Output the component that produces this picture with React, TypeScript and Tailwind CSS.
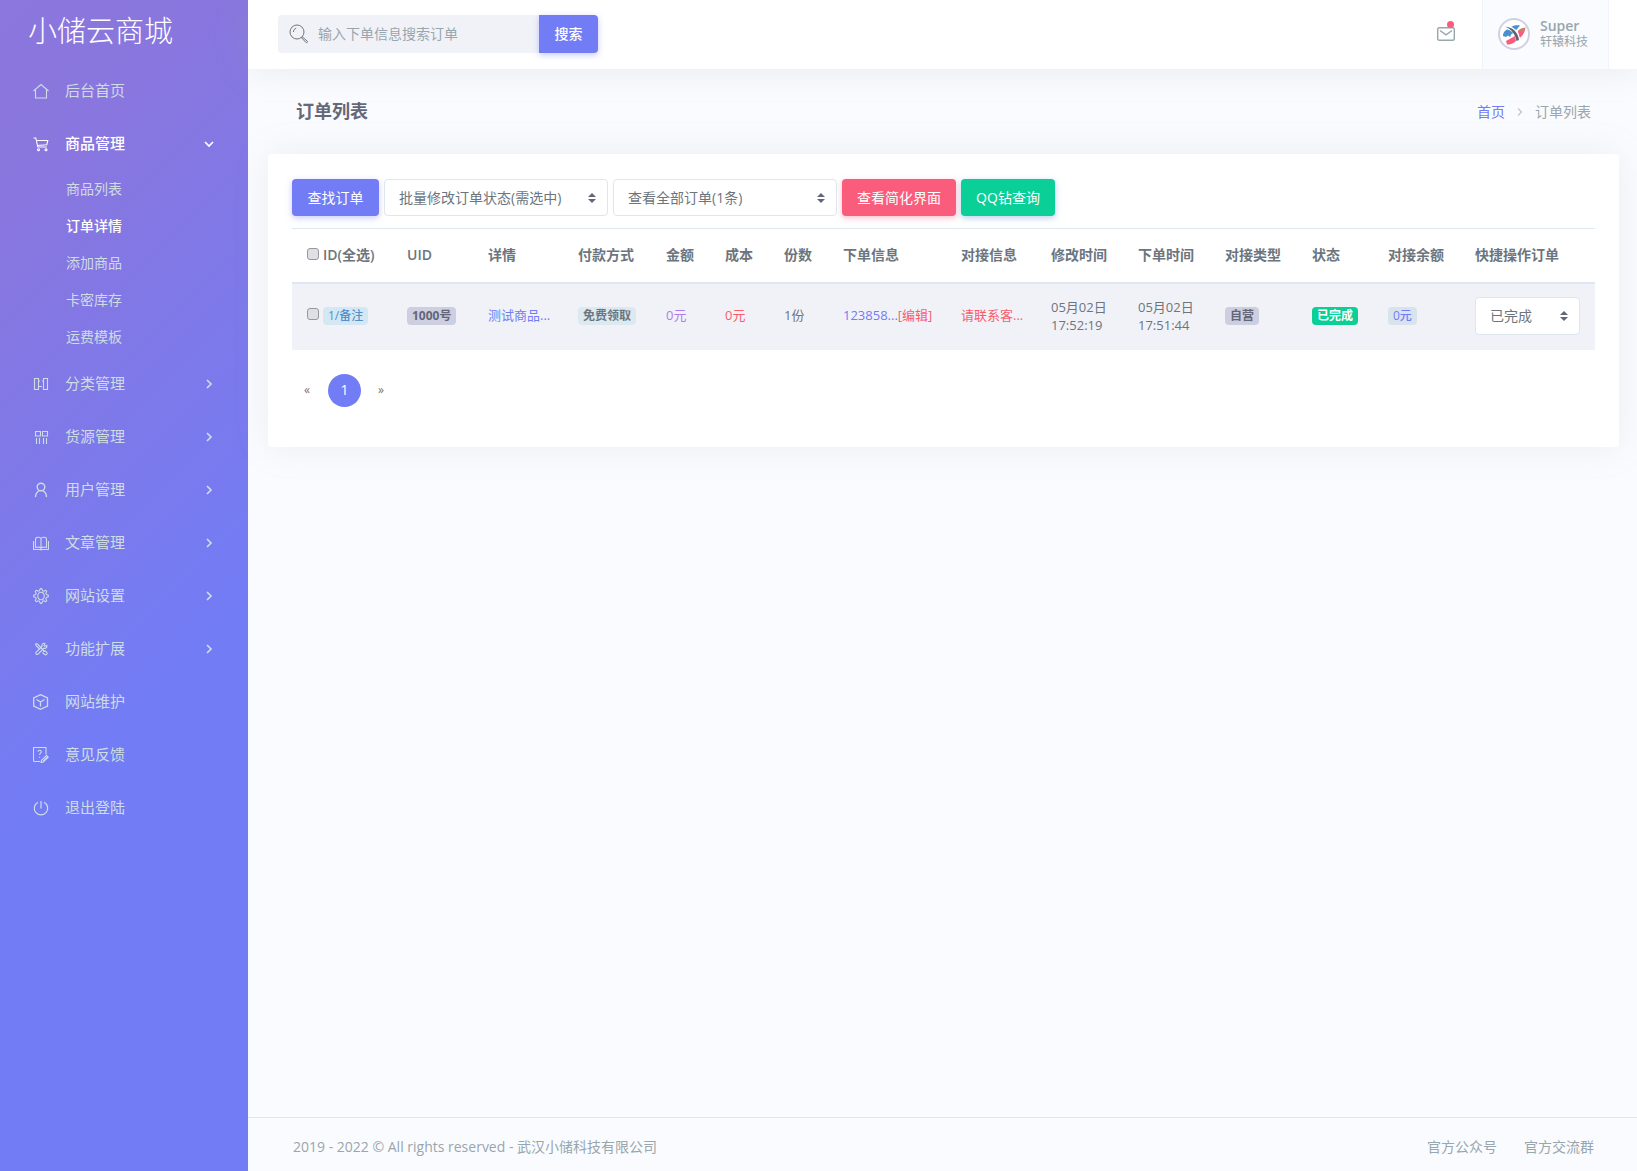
import { useState } from "react";
import type { ReactNode } from "react";
import clsx from "clsx";

type MenuItem = {
  label: string;
  icon: ReactNode;
  children?: string[];
  arrow?: boolean;
};

// eight teeth, four points each: two on the rim, two in the notch
const GEAR_POINTS = Array.from({ length: 32 }, (_, i) => {
  const angle = ((i - 0.5) * Math.PI) / 16;
  const radius = i % 4 < 2 ? 7.4 : 5.5;
  return `${(8 + radius * Math.cos(angle)).toFixed(2)},${(8 + radius * Math.sin(angle)).toFixed(2)}`;
}).join(" ");

const MENU: MenuItem[] = [
  { label: "后台首页", icon: <path d="M0.5 8 8 1.5 15.5 8M2.5 7v8h11V7" /> },
  {
    label: "商品管理",
    arrow: true,
    children: ["商品列表", "订单详情", "添加商品", "卡密库存", "运费模板"],
    icon: (
      <>
        <path d="M0.5 2h2.3l2 9h9M3.3 4.5h11.5l-1 4.2-9.4.8" />
        <circle cx="5.5" cy="13.8" r="1" />
        <circle cx="13" cy="13.8" r="1" />
      </>
    ),
  },
  {
    label: "分类管理",
    arrow: true,
    icon: <path d="M1.5 2.5h4v11h-4zM10.500 2.500h4v11h-4zM5.500 5h1.500M9 5h1.500M5.500 10.500h2.500M8 10.500h1" />,
  },
  {
    label: "货源管理",
    arrow: true,
    icon: <path d="M2.5 2.5h5v4.500h-5zM9.500 2.500h5v4.500h-5zM3.500 9v6M6.500 9v6M10.500 9v6M13.500 9v6" />,
  },
  {
    label: "用户管理",
    arrow: true,
    icon: (
      <g strokeWidth="1.4">
        <circle cx="8" cy="5" r="3.800" />
        <path d="M2.500 15c0-3 1.200-5 4-6.500M9.500 8.500c2.800 1.500 4 3.500 4 6.500" />
      </g>
    ),
  },
  {
    label: "文章管理",
    arrow: true,
    icon: (
      <path d="M8 3.500C7 2 4.500 2 3.500 2.500L2.500 4v8.500c2-.5 4.500-.5 5.500.5 1-1 3.500-1 5.500-.5V4l-1-1.500C11.500 2 9 2 8 3.500zM8 3.500V15.500M0.500 6v8.500h15V6" />
    ),
  },
  {
    label: "网站设置",
    arrow: true,
    icon: (
      <>
        <ellipse cx="8" cy="8" rx="3.200" ry="3.700" />
        <polygon points={GEAR_POINTS} strokeLinejoin="round" />
      </>
    ),
  },
  {
    label: "功能扩展",
    arrow: true,
    icon: (
      <>
        <path d="M2.500 2.500l2 .5 7 7.500M2.500 2.500l.5 2 3.500 3.500" />
        <path d="M13.800 4.300l-1.900 1-1-1 1-1.900c-2.200-.6-3.600 1.200-2.900 3.100L3 11.300c-.9 1.500 1 3 2.200 1.700l5.700-5.800c1.900.6 3.600-.8 2.900-2.900z" />
        <path d="M10 10.500l2.300-.7 1.600 1.700c.9 1.500-.9 3-2.200 2L9.500 11.500" />
      </>
    ),
  },
  {
    label: "网站维护",
    icon: (
      <path
        strokeWidth="1.3"
        d="M7.500 0.700 14.500 4v8L7.500 15.300 0.700 12V4zM3.500 5.500l4 2.500 4-2.500M7.500 8v4.500"
      />
    ),
  },
  {
    label: "意见反馈",
    icon: (
      <>
        <path d="M7 14.500H1.500c-.6 0-1-.4-1-1V0.500h12.500V7.500" />
        <path d="M5 4.800c0-2 3.300-2 3.300 0 0 1.400-1.700 1.400-1.700 3.200M6.600 9.700v1" />
        <path d="M13.500 8.500l1.700 1.700-5 4.800-2.200.5.500-2.200zM10 14.500l4.500-4.500" />
      </>
    ),
  },
  {
    label: "退出登陆",
    icon: <path strokeWidth="1.200" d="M5 2.200a6.700 6.700 0 1 0 6 0M8 1v7.500" />,
  },
];

const HEADERS = [
  { label: "UID", width: "w-[81px]" },
  { label: "详情", width: "w-[90px]" },
  { label: "付款方式", width: "w-[88px]" },
  { label: "金额", width: "w-[59px]" },
  { label: "成本", width: "w-[59px]" },
  { label: "份数", width: "w-[59px]" },
  { label: "下单信息", width: "w-[118px]" },
  { label: "对接信息", width: "w-[90px]" },
  { label: "修改时间", width: "w-[87px]" },
  { label: "下单时间", width: "w-[87px]" },
  { label: "对接类型", width: "w-[87px]" },
  { label: "状态", width: "w-[76px]" },
  { label: "对接余额", width: "w-[87px]" },
  { label: "快捷操作订单", width: "w-[135px]" },
];

function Icon({ children }: { children: ReactNode }) {
  return (
    <svg viewBox="0 0 16 16" className="h-4 w-4 shrink-0" fill="none" stroke="currentColor" strokeWidth="1.1">
      {children}
    </svg>
  );
}

function Sidebar() {
  const [open, setOpen] = useState(true);

  return (
    <aside className="w-[248px] shrink-0 bg-[linear-gradient(135deg,#8b77dd_0%,#8976de_15%,#727cf5_60%)] text-[#cedce4]">
      <a href="#" className="block h-16 pl-7 text-[29px] leading-[62px] font-light text-white">
        小储云商城
      </a>
      <nav>
        <ul>
          {MENU.map((item) => (
            <li key={item.label}>
              <a
                href="#"
                onClick={() => item.children && setOpen(!open)}
                className={clsx(
                  "flex h-[53px] items-center pr-[34px] pl-[33px] text-[15px]",
                  item.children && "font-medium text-white",
                )}
              >
                <Icon>{item.icon}</Icon>
                <span className="ml-4 flex-1">{item.label}</span>
                {item.arrow && (
                  <svg
                    viewBox="0 0 10 10"
                    className={clsx("h-[10px] w-[10px]", item.children && open && "rotate-90")}
                    fill="none"
                    stroke="currentColor"
                    strokeWidth="1.7"
                  >
                    <path d="M3 1l4 4-4 4" />
                  </svg>
                )}
              </a>
              {item.children && open && (
                <ul className="pb-[2px]">
                  {item.children.map((child) => (
                    <li key={child}>
                      <a
                        href="#"
                        className={clsx(
                          "flex h-[37px] items-center pl-[66px] text-sm",
                          child === "订单详情" && "font-medium text-white",
                        )}
                      >
                        {child}
                      </a>
                    </li>
                  ))}
                </ul>
              )}
            </li>
          ))}
        </ul>
      </nav>
    </aside>
  );
}

function Topbar() {
  return (
    <header className="flex h-[69px] shrink-0 items-center bg-white pr-7 pl-[30px] shadow-[0_0_35px_rgba(154,161,171,0.2)]">
      <form className="mb-[2px] flex h-[38px]" onSubmit={(e) => e.preventDefault()}>
        <label className="flex w-[261px] items-center rounded-l bg-[#f1f2f8] pl-[11px]">
          <svg viewBox="0 0 20 20" className="h-5 w-5 shrink-0 text-[#6c757d]" fill="none" stroke="currentColor">
            <circle cx="8" cy="8" r="7" />
            <path d="M4.500 8c0-2 1-3.200 2.700-3.800" />
            <path d="M13 12.600l5.300 4.600c.7.900-.6 2-1.400 1.200L12.200 13.400" />
          </svg>
          <input
            type="text"
            aria-label="搜索订单"
            placeholder="输入下单信息搜索订单"
            className="w-full bg-transparent pl-[9px] text-sm text-[#6c757d] outline-none placeholder:text-[#98a6ad]"
          />
        </label>
        <button
          type="submit"
          className="w-[59px] rounded-r-sm bg-[#727cf5] text-sm font-medium text-white shadow-[0_2px_6px_rgba(114,124,245,0.4)]"
        >
          搜索
        </button>
      </form>

      <button type="button" aria-label="消息" className="relative mb-[2px] ml-auto text-[#98a6ad]">
        <svg viewBox="0 0 18 14" className="h-[14px] w-[18px]" fill="none" stroke="currentColor" strokeWidth="1.4">
          <rect x="0.700" y="0.700" width="16.600" height="12.600" rx="1.500" />
          <path d="M3 3.500 9 7.800l6-4.300" />
        </svg>
        <span className="absolute -top-[6px] right-px h-[7px] w-[7px] rounded-full bg-[#fa5c7c]" />
      </button>

      <a
        href="#"
        className="ml-[27px] flex h-full w-[127px] items-center gap-[10px] border-x border-[#f1f3fa] bg-[#fafbfe] pb-[2px] pl-[15px] text-[#98a6ad]"
      >
        <svg viewBox="0 0 32 32" className="h-8 w-8 shrink-0">
          <circle cx="16" cy="16" r="15" fill="#fff" stroke="#cfd0e2" strokeWidth="2" />
          <path d="M5 18c0-4 3-6.500 6.500-8l4 5-2 1-1.500 3-2-1.500-2 1.500z" fill="#4a90d0" />
          <path d="M12 9.500c4-2.500 7-2.500 10-2l-5 6z" fill="#4a90d0" />
          <path d="M20 13l7.500-3.500c-.5 5-3.500 9-6.500 11z" fill="#fa5c7c" />
          <path d="M20 12.500l3-2 4.500-1-2 4-3.500.5z" fill="#c9806a" />
          <path d="M8 23l9-5 1 5c-2.500 2.500-6 4-9 3.500z" fill="#fa5c7c" />
          <path d="M8 9c6 1 11 5 12.500 13" fill="none" stroke="#fff" strokeWidth="4" />
          <path d="M7 8.500c7 .5 13 5 14 13.500l-2.500 1C17.500 16 13 11 7 8.500z" fill="#5d5f72" />
        </svg>
        <span>
          <span className="block text-sm leading-[17px] font-semibold">Super</span>
          <span className="block text-xs leading-4">轩辕科技</span>
        </span>
      </a>
    </header>
  );
}

function SelectBox({ options, label, className }: { options: string[]; label: string; className: string }) {
  return (
    <div className={clsx("relative", className)}>
      <select
        aria-label={label}
        className="h-full w-full appearance-none rounded border border-[#dee6ee] bg-white pl-[14px] text-sm text-[#6c757d]"
      >
        {options.map((option) => (
          <option key={option}>{option}</option>
        ))}
      </select>
      <svg viewBox="0 0 8 10" className="pointer-events-none absolute top-1/2 right-3 h-[10px] w-2 -translate-y-1/2">
        <path d="M4 0 8 4H0zM4 10 0 6h8z" fill="#626678" />
      </svg>
    </div>
  );
}

function Checkbox({ label }: { label: string }) {
  return (
    <input
      type="checkbox"
      aria-label={label}
      className="mr-1 h-3 w-3 appearance-none rounded-[3px] border border-[#96979f] bg-[#dfe0e4] align-baseline checked:bg-[#727cf5]"
    />
  );
}

function Badge({ children, className }: { children: ReactNode; className: string }) {
  return (
    <span className={clsx("inline-block rounded px-[5px] text-xs leading-[18px]", className)}>{children}</span>
  );
}

function OrderTable() {
  return (
    <table className="mt-3 w-full table-fixed border-t border-[#dee8f0] text-left text-[13px] whitespace-nowrap [&_td]:pb-[2px] [&_td]:pl-[15px] [&_th]:pl-[15px]">
      <thead>
        <tr className="h-[54px] border-b-2 border-[#dee8f0] text-sm">
          <th className="w-[100px] font-semibold">
            <Checkbox label="全选" />
            ID(全选)
          </th>
          {HEADERS.map((header) => (
            <th key={header.label} className={clsx("font-semibold", header.width)}>
              {header.label}
            </th>
          ))}
        </tr>
      </thead>
      <tbody>
        <tr className="h-[67px] bg-[#f1f2f8]">
          <td>
            <Checkbox label="选择订单 1" />
            <Badge className="bg-[#d3e8f3] font-medium text-[#5590cc]">1/备注</Badge>
          </td>
          <td>
            <Badge className="bg-[#cdcfe0] font-bold text-[#626678]">1000号</Badge>
          </td>
          <td>
            <a href="#" className="text-[#727cf5]">测试商品...</a>
          </td>
          <td>
            <Badge className="bg-[#dde9f0] font-bold">免费领取</Badge>
          </td>
          <td className="text-[#b07ce8]">0元</td>
          <td className="text-[#fa5c6c]">0元</td>
          <td>1份</td>
          <td>
            <a href="#" className="text-[#727cf5]">123858...</a>
            <a href="#" className="text-[#fa5c6c]">[编辑]</a>
          </td>
          <td className="text-[#fa5c6c]">请联系客...</td>
          <td className="leading-[18px]">
            05月02日
            <br />
            17:52:19
          </td>
          <td className="leading-[18px]">
            05月02日
            <br />
            17:51:44
          </td>
          <td>
            <Badge className="bg-[#cdcfe0] font-bold text-[#626678]">自营</Badge>
          </td>
          <td>
            <Badge className="bg-[#0acf97] font-bold text-white">已完成</Badge>
          </td>
          <td>
            <Badge className="bg-[#d8e3ee] font-medium text-[#727cf5]">0元</Badge>
          </td>
          <td className="pr-[15px]">
            <SelectBox label="快捷操作订单" options={["已完成", "待处理", "已退款"]} className="h-[38px]" />
          </td>
        </tr>
      </tbody>
    </table>
  );
}

export default function App() {
  return (
    <div className="flex min-h-screen bg-[#fafbfe] font-['Open_Sans','Noto_Sans_CJK_SC',sans-serif] text-sm text-[#6c757d]">
      <Sidebar />
      <div className="flex min-w-0 flex-1 flex-col">
        <Topbar />

        <div className="flex h-[85px] items-center justify-between pr-[46px] pl-12">
          <h1 className="pb-[2px] text-lg font-bold text-[#646878]">订单列表</h1>
          <nav aria-label="breadcrumb" className="flex items-center text-[#98a6ad]">
            <a href="#" className="text-[#727cf5]">首页</a>
            <svg viewBox="0 0 6 8" className="mx-3 h-2 w-[6px]" fill="none" stroke="#c0c6d2" strokeWidth="1.300">
              <path d="M1 0.500 4.500 4 1 7.500" />
            </svg>
            <span>订单列表</span>
          </nav>
        </div>

        <main className="mr-[18px] ml-5 rounded bg-white px-6 pt-[25px] pb-10 shadow-[0_0_35px_rgba(154,161,171,0.15)]">
          <div className="flex h-[37px] gap-[5px]">
            <button
              type="button"
              className="w-[87px] rounded-sm bg-[#727cf5] text-white shadow-[0_2px_6px_rgba(114,124,245,0.4)]"
            >
              查找订单
            </button>
            <SelectBox
              label="批量修改订单状态"
              options={["批量修改订单状态(需选中)", "已完成", "待处理"]}
              className="w-[224px]"
            />
            <SelectBox label="订单筛选" options={["查看全部订单(1条)", "已完成"]} className="w-[224px]" />
            <button
              type="button"
              className="w-[114px] rounded-sm bg-[#fa5c7c] text-white shadow-[0_2px_6px_rgba(250,92,124,0.4)]"
            >
              查看简化界面
            </button>
            <button
              type="button"
              className="w-[94px] rounded-sm bg-[#0acf97] text-white shadow-[0_2px_6px_rgba(114,160,220,0.5)]"
            >
              QQ钻查询
            </button>
          </div>

          <OrderTable />

          <nav aria-label="分页" className="mt-6 flex h-[33px] items-center text-xs">
            <a href="#" aria-label="上一页" className="w-9 pl-3">«</a>
            <a
              href="#"
              aria-current="page"
              className="flex h-[33px] w-[33px] items-center justify-center rounded-full bg-[#727cf5] text-sm font-medium text-white"
            >
              1
            </a>
            <a href="#" aria-label="下一页" className="pl-[17px]">»</a>
          </nav>
        </main>

        <footer className="mt-auto flex h-[54px] items-center justify-between border-t border-[#e2e7ec] pt-[5px] pr-[43px] pl-[45px] text-[#98a6ad]">
          <p>2019 - 2022 © All rights reserved - 武汉小储科技有限公司</p>
          <div className="flex gap-[27px]">
            <a href="#">官方公众号</a>
            <a href="#">官方交流群</a>
          </div>
        </footer>
      </div>
    </div>
  );
}
